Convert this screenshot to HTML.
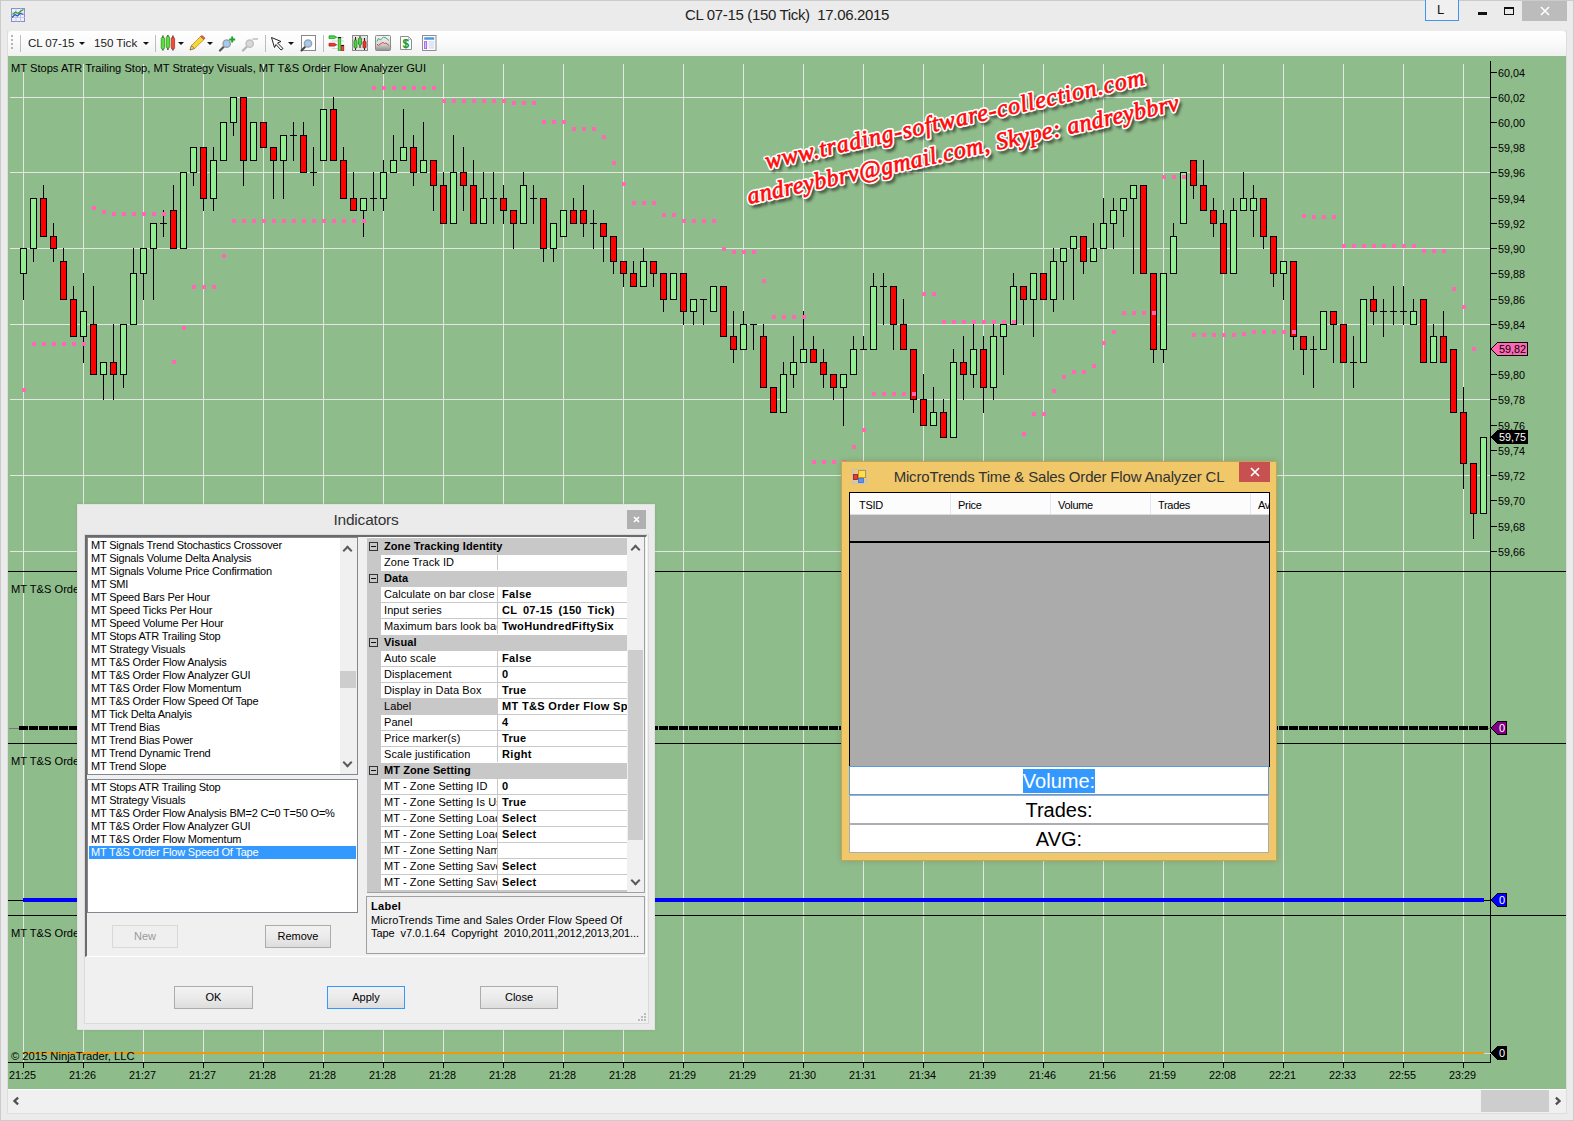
<!DOCTYPE html>
<html><head><meta charset="utf-8"><title>CL 07-15 (150 Tick) 17.06.2015</title>
<style>
*{box-sizing:border-box;margin:0;padding:0}
html,body{width:1574px;height:1121px;overflow:hidden;background:#ebebeb;font-family:"Liberation Sans",sans-serif;font-size:11px;color:#000}
.abs{position:absolute}
#win{position:absolute;left:0;top:0;width:1574px;height:1121px;background:#ebebeb;border:1px solid #cbcbcb}
#cl{position:absolute;left:7px;top:30px;width:1560px;height:1084px;border:1px solid #dedede;border-top:0}
#title{position:absolute;left:685px;top:5px;width:204px;font-size:15px;line-height:20px;color:#222;white-space:nowrap;letter-spacing:-0.34px}
#tb{position:absolute;left:8px;top:31px;width:1558px;height:25px;background:linear-gradient(#fff,#fafafa 50%,#f0f0f0);border-radius:4px 4px 3px 3px}
#chart{position:absolute;left:8px;top:56px;width:1558px;height:1033px;background:#8fbc8b}
#sb{position:absolute;left:8px;top:1089px;width:1558px;height:24px;background:#f0f0f0;border-top:1px solid #fff}
#sb .th{position:absolute;left:1473px;top:0;width:68px;height:22px;background:#cdcdcd}
svg{position:absolute;left:0;top:0}
svg text{font-family:"Liberation Sans",sans-serif}
  .tbt{position:absolute;top:35px;font-size:11.6px;line-height:15px;color:#1a1a1a;white-space:nowrap}
.dd{position:absolute;top:42px;width:0;height:0;border:3px solid transparent;border-top:3.5px solid #111;border-bottom:0}
.sep{position:absolute;top:35px;width:1px;height:17px;background:#bdbdbd}

#dlg{position:absolute;left:77px;top:504px;width:578px;height:526px;background:#ebebeb;border:1px solid #e2e2e2;box-shadow:0 0 3px rgba(0,0,0,.08)}
#dlg .ttl{position:absolute;left:0;top:5px;width:576px;text-align:center;font-size:15.5px;line-height:20px;color:#333;letter-spacing:-0.2px}
#dlg .x{position:absolute;left:549px;top:5px;width:19px;height:19px;background:#b0b0b0;color:#fff;font-size:13px;line-height:18px;text-align:center;font-weight:bold}
#cli{position:absolute;left:6px;top:29px;width:565px;height:490px;background:#f0f0f0;border:1px solid #dadada}
#sunk{position:absolute;left:0;top:0;width:562px;height:422px;border-top:2px solid #6b6b6b;border-left:2px solid #6b6b6b;border-bottom:1px solid #fff;border-right:1px solid #fff}
.lb{position:absolute;background:#fff;border:1px solid #828790;overflow:hidden}
.lb div{height:13px;line-height:13px;padding-left:3px;white-space:nowrap;font-size:11px;letter-spacing:-0.2px}
.lb .sel{background:#3399ff;color:#fff}
.vsb{position:absolute;background:#f0f0f0}
.vsb i{position:absolute;left:0;background:#cdcdcd}
.btn{position:absolute;height:23px;border:1px solid #acacac;background:linear-gradient(#f2f2f2,#ebebeb 50%,#dddddd);font-size:11px;line-height:21px;text-align:center;color:#000}
.btn.dis{border-color:#d9d9d9;background:#efefef;color:#9a9a9a}
.btn.def{border-color:#3399ff}
#pg{position:absolute;left:282px;top:2px;width:278px;height:356px;background:#c8c8c8;border-right:1px solid #a0a0a0;border-bottom:1px solid #a0a0a0;overflow:hidden}
#pg .r{position:absolute;left:14px;width:246px;height:16px;background:#fff;border-bottom:1px solid #c8c8c8}
#pg .r b,#pg .r span{position:absolute;top:0;height:15px;line-height:15px;white-space:nowrap;overflow:hidden;font-size:11px}
#pg .r span{left:0;width:116px;padding-left:3px;letter-spacing:0.08px}
#pg .r b{left:116px;width:130px;padding-left:4px;border-left:1px solid #c8c8c8;letter-spacing:0.33px}
#pg .r.s span{background:#c8c8c8}
#pg .c{position:absolute;left:0;width:260px;height:16px;background:#c8c8c8;font-weight:bold;line-height:15px;padding-left:17px;white-space:nowrap;letter-spacing:0.08px}
#pg .c i{position:absolute;left:2px;top:3px;width:9px;height:9px;border:1px solid #333;background:#c8c8c8}
#pg .c i:after{content:"";position:absolute;left:1px;top:3px;width:5px;height:1px;background:#111}
#desc{position:absolute;left:281px;top:361px;width:279px;height:58px;border:1px solid #a0a0a0;background:#f0f0f0;padding:3px 0 0 4px;line-height:13px;font-size:11px;white-space:nowrap;overflow:hidden;letter-spacing:0.1px}
.chev{position:absolute;left:4px;width:7px;height:7px;border-left:2px solid #5a5a5a;border-top:2px solid #5a5a5a}

#ts{position:absolute;left:841px;top:461px;width:436px;height:400px;background:#f0c869;border:1px solid #c9a352;box-shadow:0 0 6px rgba(0,0,0,.15)}
#ts .ttl{position:absolute;left:0;top:5px;width:434px;text-align:center;font-size:15px;line-height:20px;color:#333;white-space:nowrap;letter-spacing:-0.17px}
#ts .x{position:absolute;left:397px;top:0;width:31px;height:20px;background:#c75050}
#tsc{position:absolute;left:7px;top:30px;width:421px;height:275px;background:#ababab;border:1px solid #000;border-right-width:1px}
#tsc .hd{position:absolute;left:0;top:0;width:419px;height:22px;background:#fcfcfc;border-bottom:1px solid #dcdcdc}
#tsc .hd span{position:absolute;top:0;height:21px;line-height:24px;padding-left:7px;border-right:1px solid #e2e6ee;font-size:11px;width:100px;overflow:hidden;white-space:nowrap;letter-spacing:-0.3px}
#tsc .bl{position:absolute;left:0;top:48px;width:419px;height:2px;background:#000}
.tsr{position:absolute;left:0;width:420px;height:29px;background:#fff;border:1px solid #abadb3;text-align:center;font-size:20px;line-height:28px;letter-spacing:0px}
.tsr em{font-style:normal;background:#3399ff;color:#fff;display:inline-block;height:24px;line-height:24px}
svg .wmt text{font-family:"Liberation Serif",serif;font-style:italic;font-size:24px}
</style></head><body>
<div id="win"></div><div id="cl"></div>

<div id="title">CL 07-15 (150 Tick)&nbsp; 17.06.2015</div>
<!-- app icon -->
<svg class="abs" style="left:11px;top:8px" width="14" height="14" viewBox="0 0 14 14"><rect x=".5" y=".5" width="13" height="13" fill="#eef0fa" stroke="#8c8cc8"/><path d="M.5 5H13.5M.5 9.5H13.5M5 .5V13.5M9.5 .5V13.5" stroke="#c4c8e6" fill="none"/><path d="M1 9.5L4 6.5L6.5 8L9 5.5L12.5 6.5" stroke="#2b50c8" stroke-width="1.3" fill="none"/><path d="M1.5 6.5L4.5 4L7 5.5L10 3L12.5 1.5" stroke="#2ea52e" stroke-width="1.4" fill="none"/></svg>
<!-- window controls -->
<div class="abs" style="left:1425px;top:0;width:34px;height:21px;border:1px solid #3c96f5;border-top:0;background:#f0f0f0"></div>
<div class="abs" style="left:1437px;top:2px;font-size:13px;line-height:15px;color:#111">L</div>
<div class="abs" style="left:1478px;top:12px;width:9px;height:3px;background:#111"></div>
<div class="abs" style="left:1504px;top:7px;width:10px;height:8px;border:1px solid #111;border-top-width:2px"></div>
<div class="abs" style="left:1522px;top:1px;width:45px;height:20px;background:#bcbcbc"></div>
<svg class="abs" style="left:1540px;top:6px" width="10" height="10" viewBox="0 0 10 10"><path d="M1 1L9 9M9 1L1 9" stroke="#fff" stroke-width="1.6"/></svg>
<div id="tb"></div>
<!-- grip -->
<div class="abs" style="left:11px;top:35px;width:2px;height:2px;background:#b5b5b5;box-shadow:0 4px #b5b5b5,0 8px #b5b5b5,0 12px #b5b5b5"></div>
<div class="sep" style="left:20px"></div>
<div class="tbt" style="left:28px;letter-spacing:-0.12px">CL 07-15</div><div class="dd" style="left:79px"></div>
<div class="tbt" style="left:94px;letter-spacing:0">150 Tick</div><div class="dd" style="left:142.5px"></div>
<div class="sep" style="left:155px"></div>
<!-- candles icon -->
<svg class="abs" style="left:160px;top:35px" width="16" height="16" viewBox="0 0 16 16"><path d="M2.9 .5V15.5M7.9 0V15M12.9 .5V15.5" stroke="#222" stroke-width="1.2"/><rect x="1.2" y="2.2" width="3.4" height="12" rx="1.6" fill="#5ade3c" stroke="#2a8a1a" stroke-width=".7"/><rect x="6.2" y="1.2" width="3.4" height="12" rx="1.6" fill="#5ade3c" stroke="#2a8a1a" stroke-width=".7"/><rect x="11.2" y="2.2" width="3.4" height="12" rx="1.6" fill="#f04a3c" stroke="#9c2a1c" stroke-width=".7"/></svg>
<div class="dd" style="left:178px"></div>
<!-- pencil -->
<svg class="abs" style="left:189px;top:35px" width="17" height="16" viewBox="0 0 17 16"><path d="M1 15L2.5 10.5L11.5 1.5L15 4.5L5.5 13.5z" fill="#f7d63c" stroke="#b8901a" stroke-width=".8"/><path d="M11.5 1.5L13 .5L16 3L15 4.5z" fill="#e66a5a" stroke="#a03a30" stroke-width=".6"/><path d="M1 15L2.5 10.5L5.5 13.5z" fill="#e8c9a0" stroke="#6a5a3a" stroke-width=".6"/></svg>
<div class="dd" style="left:207px"></div>
<!-- zoom in -->
<svg class="abs" style="left:218px;top:34px" width="18" height="18" viewBox="0 0 18 18"><path d="M2 16.5L6 12.5" stroke="#555" stroke-width="2.2" stroke-linecap="round"/><circle cx="8.7" cy="9.7" r="3.6" fill="#a4ccf0" stroke="#98a2ae" stroke-width="1.5"/><path d="M14.2 2.5V8.5M11.2 5.5H17.2" stroke="#1da32a" stroke-width="2"/></svg>
<!-- zoom out -->
<svg class="abs" style="left:241px;top:34px" width="18" height="18" viewBox="0 0 18 18"><path d="M2 16.5L6 12.5" stroke="#b4b4b4" stroke-width="2.2" stroke-linecap="round"/><circle cx="8.7" cy="9.7" r="3.6" fill="#d8d8d8" stroke="#c0c0c0" stroke-width="1.5"/><path d="M11.5 5H17" stroke="#c0c0c0" stroke-width="1.6"/></svg>
<div class="sep" style="left:265px"></div>
<!-- cursor -->
<svg class="abs" style="left:270px;top:36px" width="15" height="15" viewBox="0 0 15 15"><path d="M1.5 1.5L11 5.5L7.5 7L13 12.5L11 14L6 8.5L4.5 11.5z" fill="#fff" stroke="#222" stroke-width="1"/></svg>
<div class="dd" style="left:288px"></div>
<!-- magnifier box -->
<svg class="abs" style="left:300px;top:35px" width="16" height="17" viewBox="0 0 16 17"><rect x="1.5" y=".5" width="14" height="15" fill="#fff" stroke="#888"/><path d="M1.5 15.5L5 12" stroke="#444" stroke-width="2" stroke-linecap="round"/><circle cx="8" cy="8.5" r="3.6" fill="#a4ccf0" stroke="#98a2ae" stroke-width="1.5"/></svg>
<div class="sep" style="left:323px"></div>
<!-- DOM icon -->
<svg class="abs" style="left:328px;top:35px" width="17" height="16" viewBox="0 0 17 16"><path d="M4 2.5H16M4 6H16M4 10H16M4 13.5H16" stroke="#d4d4d4"/><path d="M1 .8H6.5L8.6 2.2L6.5 3.6H1z" fill="#3ce03c" stroke="#1f8a1f" stroke-width=".7"/><path d="M1 8.3H6.5L8.6 9.7L6.5 11.1H1z" fill="#f03a30" stroke="#9c1a14" stroke-width=".7"/><rect x="10.2" y="2.5" width="2.6" height="13.5" fill="#5ae03c" stroke="#1f8a1f" stroke-width=".7"/><rect x="10.2" y="2" width="2.6" height="1.2" fill="#111"/><rect x="13.5" y="10.5" width="2.3" height="5.5" fill="#f04a3c" stroke="#9c1a14" stroke-width=".7"/><rect x="13.5" y="10" width="2.3" height="1.1" fill="#111"/></svg>
<!-- candle chart icon -->
<svg class="abs" style="left:352px;top:35px" width="16" height="16" viewBox="0 0 16 16"><rect x=".5" y=".5" width="15" height="15" fill="#e6e6e6" stroke="#8a8a8a"/><path d="M.5 4H15.5M.5 8H15.5M.5 12H15.5" stroke="#c4c4c4"/><path d="M3.5 2V15M8 1V13M12.5 3V15" stroke="#222"/><rect x="2" y="5" width="3" height="8" rx="1" fill="#4fd23a" stroke="#1f7a14" stroke-width=".7"/><rect x="6.5" y="3" width="3" height="7" rx="1" fill="#4fd23a" stroke="#1f7a14" stroke-width=".7"/><rect x="11" y="6" width="3" height="7" rx="1" fill="#ee3a30" stroke="#8c1a14" stroke-width=".7"/></svg>
<!-- line chart icon -->
<svg class="abs" style="left:375px;top:35px" width="16" height="16" viewBox="0 0 16 16"><defs><linearGradient id="lg1" x1="0" y1="0" x2="0" y2="1"><stop offset="0" stop-color="#f6f6f6"/><stop offset=".55" stop-color="#d8d8d8"/><stop offset="1" stop-color="#8e8e8e"/></linearGradient></defs><rect x=".5" y=".5" width="15" height="15" rx="1" fill="url(#lg1)" stroke="#8a8a8a"/><path d="M2 6.5L3.5 3.5L5.5 5L8.5 2L11 3L14 5.5" stroke="#2fb070" fill="none"/><path d="M2 9L3.5 10.5L6 8.5L8 7.5L9.5 8.5L11 8L14 10.5" stroke="#e04040" fill="none"/></svg>
<!-- $ page -->
<svg class="abs" style="left:399px;top:35px" width="14" height="16" viewBox="0 0 14 16"><path d="M1.5 1.5H9.5L12.5 4.5V14.5H1.5z" fill="#fff" stroke="#8e8e8e"/><path d="M9.5 1.5V4.5H12.5" fill="none" stroke="#b0b0b0" stroke-width=".8"/><text x="6.8" y="12.6" font-size="12" font-weight="bold" fill="#1f9a30" text-anchor="middle">$</text><path d="M6.8 4V13.1" stroke="#1f9a30" stroke-width="1"/></svg>
<!-- table icon -->
<svg class="abs" style="left:422px;top:35px" width="15" height="16" viewBox="0 0 15 16"><rect x=".5" y=".5" width="13.5" height="15" fill="#fdfdfe" stroke="#8e8e96"/><rect x="2.2" y="2.2" width="10" height="2.6" rx=".6" fill="#4a9ae0"/><rect x="2.6" y="6.6" width="2" height="7" fill="#d8c4f8" stroke="#a05af0" stroke-width=".9"/><path d="M6.5 6.8H12.2M6.5 8.8H12.2M6.5 10.8H12.2M6.5 12.8H12.2" stroke="#d4d8ea" stroke-width="1.2"/></svg>

<div id="chart"></div>
<div id="sb"><div class="th"></div><svg class="abs" style="left:4px;top:5.5px" width="8" height="10" viewBox="0 0 8 10"><path d="M6.1 1.7L2.5 5L6.1 8.3" stroke="#505050" stroke-width="2.3" fill="none"/></svg><svg class="abs" style="left:1546px;top:5.5px" width="8" height="10" viewBox="0 0 8 10"><path d="M1.9 1.7L5.5 5L1.9 8.3" stroke="#505050" stroke-width="2.3" fill="none"/></svg></div>
<svg width="1574" height="1121" viewBox="0 0 1574 1121" shape-rendering="crispEdges">
<path d="M10 97.5H1490M10 172.5H1490M10 248.5H1490M10 324.5H1490M10 399.5H1490M10 475.5H1490M10 551.5H1490M23.5 64V1062M83.5 64V1062M143.5 64V1062M203.5 64V1062M263.5 64V1062M323.5 64V1062M383.5 64V1062M443.5 64V1062M503.5 64V1062M563.5 64V1062M623.5 64V1062M683.5 64V1062M743.5 64V1062M803.5 64V1062M863.5 64V1062M923.5 64V1062M983.5 64V1062M1043.5 64V1062M1103.5 64V1062M1163.5 64V1062M1223.5 64V1062M1283.5 64V1062M1343.5 64V1062M1403.5 64V1062M1463.5 64V1062" stroke="#e4e6e4" stroke-width="1" fill="none"/>
<path d="M23.5 248V300M33.5 198V262M43.5 185V237M53.5 223V262M63.5 248V300M73.5 286V337M83.5 273V363M93.5 286V375M103.5 362V400M113.5 324V400M123.5 324V388M133.5 248V325M143.5 248V300M153.5 223V300M163.5 210V237M160 223.5H167M173.5 185V249M193.5 147V186M203.5 147V211M213.5 147V211M233.5 97V136M243.5 97V186M273.5 147V199M283.5 135V199M293.5 122V161M290 135.5H297M303.5 122V173M313.5 147V186M310 172.5H317M333.5 97V161M343.5 147V199M353.5 172V211M363.5 198V237M373.5 172V211M370 198.5H377M383.5 160V211M393.5 135V173M403.5 109V161M413.5 135V186M423.5 122V173M433.5 160V211M443.5 172V224M453.5 135V224M463.5 147V211M473.5 160V224M483.5 172V224M493.5 172V224M490 198.5H497M503.5 185V224M513.5 210V249M523.5 172V224M533.5 185V224M530 198.5H537M543.5 198V262M553.5 223V262M573.5 198V224M583.5 185V237M593.5 210V249M590 223.5H597M603.5 223V262M613.5 236V274M623.5 261V287M633.5 261V287M643.5 248V287M653.5 261V287M663.5 273V312M683.5 273V325M693.5 299V325M703.5 299V325M700 299.5H707M733.5 311V363M743.5 311V350M753.5 324V350M750 324.5H757M763.5 324V388M783.5 362V413M793.5 336V388M803.5 311V363M813.5 336V363M823.5 349V388M833.5 374V400M843.5 374V426M853.5 336V375M863.5 336V350M860 349.5H867M873.5 273V350M883.5 273V325M880 286.5H887M893.5 286V350M903.5 299V350M913.5 349V413M923.5 374V426M933.5 387V426M943.5 399V438M953.5 349V438M963.5 336V400M973.5 324V388M983.5 336V413M993.5 324V400M1003.5 324V375M1013.5 273V325M1023.5 286V325M1033.5 273V337M1053.5 248V312M1063.5 248V300M1073.5 236V300M1083.5 236V274M1093.5 223V262M1103.5 198V249M1113.5 198V249M1123.5 198V237M1133.5 185V274M1153.5 273V363M1163.5 273V363M1173.5 223V274M1193.5 160V199M1203.5 160V211M1213.5 198V237M1223.5 210V274M1233.5 198V274M1243.5 172V211M1253.5 185V237M1263.5 198V249M1273.5 236V287M1283.5 261V300M1293.5 261V350M1303.5 336V375M1313.5 336V388M1310 349.5H1317M1333.5 311V363M1353.5 336V388M1350 362.5H1357M1373.5 286V325M1383.5 299V337M1380 311.5H1387M1393.5 286V325M1390 311.5H1397M1403.5 286V325M1400 311.5H1407M1413.5 299V325M1433.5 324V363M1443.5 311V363M1463.5 387V489M1473.5 463V539" stroke="#000" stroke-width="1" fill="none"/>
<path d="M20.5 248.5H26.5V273.5H20.5zM30.5 198.5H36.5V248.5H30.5zM80.5 311.5H86.5V336.5H80.5zM100.5 362.5H106.5V374.5H100.5zM120.5 324.5H126.5V374.5H120.5zM130.5 273.5H136.5V324.5H130.5zM140.5 248.5H146.5V273.5H140.5zM150.5 223.5H156.5V248.5H150.5zM180.5 172.5H186.5V248.5H180.5zM190.5 147.5H196.5V172.5H190.5zM210.5 160.5H216.5V198.5H210.5zM220.5 122.5H226.5V160.5H220.5zM230.5 97.5H236.5V122.5H230.5zM250.5 122.5H256.5V160.5H250.5zM280.5 135.5H286.5V160.5H280.5zM320.5 109.5H326.5V160.5H320.5zM360.5 198.5H366.5V210.5H360.5zM380.5 172.5H386.5V198.5H380.5zM390.5 160.5H396.5V172.5H390.5zM400.5 147.5H406.5V160.5H400.5zM420.5 160.5H426.5V172.5H420.5zM450.5 172.5H456.5V223.5H450.5zM480.5 198.5H486.5V223.5H480.5zM520.5 185.5H526.5V223.5H520.5zM550.5 223.5H556.5V248.5H550.5zM560.5 210.5H566.5V236.5H560.5zM640.5 261.5H646.5V286.5H640.5zM670.5 273.5H676.5V299.5H670.5zM690.5 299.5H696.5V311.5H690.5zM710.5 286.5H716.5V311.5H710.5zM740.5 324.5H746.5V349.5H740.5zM780.5 374.5H786.5V412.5H780.5zM790.5 362.5H796.5V374.5H790.5zM800.5 349.5H806.5V362.5H800.5zM840.5 374.5H846.5V387.5H840.5zM850.5 349.5H856.5V374.5H850.5zM870.5 286.5H876.5V349.5H870.5zM930.5 412.5H936.5V425.5H930.5zM950.5 362.5H956.5V437.5H950.5zM970.5 349.5H976.5V374.5H970.5zM990.5 336.5H996.5V387.5H990.5zM1000.5 324.5H1006.5V336.5H1000.5zM1010.5 286.5H1016.5V324.5H1010.5zM1030.5 273.5H1036.5V299.5H1030.5zM1050.5 261.5H1056.5V299.5H1050.5zM1060.5 248.5H1066.5V261.5H1060.5zM1070.5 236.5H1076.5V248.5H1070.5zM1090.5 248.5H1096.5V261.5H1090.5zM1100.5 223.5H1106.5V248.5H1100.5zM1110.5 210.5H1116.5V223.5H1110.5zM1120.5 198.5H1126.5V210.5H1120.5zM1130.5 185.5H1136.5V198.5H1130.5zM1160.5 273.5H1166.5V349.5H1160.5zM1170.5 236.5H1176.5V273.5H1170.5zM1180.5 172.5H1186.5V223.5H1180.5zM1230.5 210.5H1236.5V273.5H1230.5zM1240.5 198.5H1246.5V210.5H1240.5zM1250.5 198.5H1256.5V210.5H1250.5zM1280.5 261.5H1286.5V273.5H1280.5zM1320.5 311.5H1326.5V349.5H1320.5zM1360.5 299.5H1366.5V362.5H1360.5zM1410.5 311.5H1416.5V324.5H1410.5zM1430.5 336.5H1436.5V362.5H1430.5zM1480.5 437.5H1486.5V513.5H1480.5z" stroke="#000" stroke-width="1" fill="#90ee90"/>
<path d="M40.5 198.5H46.5V236.5H40.5zM50.5 236.5H56.5V248.5H50.5zM60.5 261.5H66.5V299.5H60.5zM70.5 299.5H76.5V336.5H70.5zM90.5 324.5H96.5V374.5H90.5zM110.5 362.5H116.5V374.5H110.5zM170.5 210.5H176.5V248.5H170.5zM200.5 147.5H206.5V198.5H200.5zM240.5 97.5H246.5V160.5H240.5zM260.5 122.5H266.5V147.5H260.5zM270.5 147.5H276.5V160.5H270.5zM300.5 135.5H306.5V172.5H300.5zM330.5 109.5H336.5V160.5H330.5zM340.5 160.5H346.5V198.5H340.5zM350.5 198.5H356.5V210.5H350.5zM410.5 147.5H416.5V172.5H410.5zM430.5 160.5H436.5V185.5H430.5zM440.5 185.5H446.5V223.5H440.5zM460.5 172.5H466.5V185.5H460.5zM470.5 185.5H476.5V223.5H470.5zM500.5 198.5H506.5V210.5H500.5zM510.5 210.5H516.5V223.5H510.5zM540.5 198.5H546.5V248.5H540.5zM570.5 210.5H576.5V223.5H570.5zM580.5 210.5H586.5V223.5H580.5zM600.5 223.5H606.5V236.5H600.5zM610.5 236.5H616.5V261.5H610.5zM620.5 261.5H626.5V273.5H620.5zM630.5 273.5H636.5V286.5H630.5zM650.5 261.5H656.5V273.5H650.5zM660.5 273.5H666.5V299.5H660.5zM680.5 273.5H686.5V311.5H680.5zM720.5 286.5H726.5V336.5H720.5zM730.5 336.5H736.5V349.5H730.5zM760.5 336.5H766.5V387.5H760.5zM770.5 387.5H776.5V412.5H770.5zM810.5 349.5H816.5V362.5H810.5zM820.5 362.5H826.5V374.5H820.5zM830.5 374.5H836.5V387.5H830.5zM890.5 286.5H896.5V324.5H890.5zM900.5 324.5H906.5V349.5H900.5zM910.5 349.5H916.5V399.5H910.5zM920.5 399.5H926.5V425.5H920.5zM940.5 412.5H946.5V437.5H940.5zM960.5 362.5H966.5V374.5H960.5zM980.5 349.5H986.5V387.5H980.5zM1020.5 286.5H1026.5V299.5H1020.5zM1040.5 273.5H1046.5V299.5H1040.5zM1080.5 236.5H1086.5V261.5H1080.5zM1140.5 185.5H1146.5V273.5H1140.5zM1150.5 273.5H1156.5V349.5H1150.5zM1190.5 160.5H1196.5V185.5H1190.5zM1200.5 185.5H1206.5V210.5H1200.5zM1210.5 210.5H1216.5V223.5H1210.5zM1220.5 223.5H1226.5V273.5H1220.5zM1260.5 198.5H1266.5V236.5H1260.5zM1270.5 236.5H1276.5V273.5H1270.5zM1290.5 261.5H1296.5V336.5H1290.5zM1300.5 336.5H1306.5V349.5H1300.5zM1330.5 311.5H1336.5V324.5H1330.5zM1340.5 324.5H1346.5V362.5H1340.5zM1370.5 299.5H1376.5V311.5H1370.5zM1420.5 299.5H1426.5V362.5H1420.5zM1440.5 336.5H1446.5V362.5H1440.5zM1450.5 349.5H1456.5V412.5H1450.5zM1460.5 412.5H1466.5V463.5H1460.5zM1470.5 463.5H1476.5V513.5H1470.5z" stroke="#000" stroke-width="1" fill="#ff0000"/>
<path d="M22 388h4v4h-4zM32 342h4v4h-4zM42 342h4v4h-4zM52 342h4v4h-4zM62 342h4v4h-4zM72 342h4v4h-4zM82 342h4v4h-4zM92 206h4v4h-4zM102 210h4v4h-4zM112 212h4v4h-4zM122 212h4v4h-4zM132 212h4v4h-4zM142 212h4v4h-4zM152 212h4v4h-4zM162 212h4v4h-4zM172 360h4v4h-4zM182 326h4v4h-4zM192 285h4v4h-4zM202 285h4v4h-4zM212 285h4v4h-4zM222 254h4v4h-4zM232 219h4v4h-4zM242 219h4v4h-4zM252 219h4v4h-4zM262 219h4v4h-4zM272 219h4v4h-4zM282 219h4v4h-4zM292 219h4v4h-4zM302 219h4v4h-4zM312 219h4v4h-4zM322 219h4v4h-4zM332 219h4v4h-4zM342 219h4v4h-4zM352 219h4v4h-4zM362 219h4v4h-4zM372 86h4v4h-4zM382 86h4v4h-4zM392 86h4v4h-4zM402 86h4v4h-4zM412 86h4v4h-4zM422 86h4v4h-4zM432 86h4v4h-4zM442 99h4v4h-4zM452 99h4v4h-4zM462 99h4v4h-4zM472 99h4v4h-4zM482 99h4v4h-4zM492 99h4v4h-4zM502 99h4v4h-4zM512 101h4v4h-4zM522 101h4v4h-4zM532 101h4v4h-4zM542 120h4v4h-4zM552 120h4v4h-4zM562 120h4v4h-4zM572 127h4v4h-4zM582 127h4v4h-4zM592 127h4v4h-4zM602 135h4v4h-4zM612 161h4v4h-4zM622 182h4v4h-4zM632 201h4v4h-4zM642 201h4v4h-4zM652 201h4v4h-4zM662 213h4v4h-4zM672 213h4v4h-4zM682 219h4v4h-4zM692 219h4v4h-4zM702 219h4v4h-4zM712 219h4v4h-4zM722 247h4v4h-4zM732 250h4v4h-4zM742 250h4v4h-4zM752 250h4v4h-4zM762 279h4v4h-4zM772 315h4v4h-4zM782 315h4v4h-4zM792 315h4v4h-4zM802 315h4v4h-4zM812 460h4v4h-4zM822 460h4v4h-4zM832 460h4v4h-4zM842 460h4v4h-4zM852 445h4v4h-4zM862 428h4v4h-4zM872 392h4v4h-4zM882 392h4v4h-4zM892 392h4v4h-4zM902 392h4v4h-4zM912 392h4v4h-4zM922 292h4v4h-4zM932 292h4v4h-4zM942 320h4v4h-4zM952 320h4v4h-4zM962 320h4v4h-4zM972 320h4v4h-4zM982 320h4v4h-4zM992 320h4v4h-4zM1002 320h4v4h-4zM1012 320h4v4h-4zM1022 432h4v4h-4zM1032 412h4v4h-4zM1042 412h4v4h-4zM1052 389h4v4h-4zM1062 375h4v4h-4zM1072 370h4v4h-4zM1082 370h4v4h-4zM1092 364h4v4h-4zM1102 341h4v4h-4zM1112 330h4v4h-4zM1122 311h4v4h-4zM1132 311h4v4h-4zM1142 311h4v4h-4zM1152 311h4v4h-4zM1162 175h4v4h-4zM1172 175h4v4h-4zM1182 175h4v4h-4zM1192 333h4v4h-4zM1202 333h4v4h-4zM1212 333h4v4h-4zM1222 333h4v4h-4zM1232 333h4v4h-4zM1242 332h4v4h-4zM1252 330h4v4h-4zM1262 330h4v4h-4zM1272 330h4v4h-4zM1282 330h4v4h-4zM1292 330h4v4h-4zM1302 214h4v4h-4zM1312 215h4v4h-4zM1322 215h4v4h-4zM1332 215h4v4h-4zM1342 244h4v4h-4zM1352 244h4v4h-4zM1362 244h4v4h-4zM1372 244h4v4h-4zM1382 244h4v4h-4zM1392 244h4v4h-4zM1402 244h4v4h-4zM1412 244h4v4h-4zM1422 249h4v4h-4zM1432 249h4v4h-4zM1442 249h4v4h-4zM1452 287h4v4h-4zM1462 305h4v4h-4zM1472 347h4v4h-4z" fill="#ff69b4"/>
<path d="M8 571.5H1566M8 743.5H1566M8 915.5H1566M8 1062.5H1491M1490.5 61V1063" stroke="#000" fill="none"/>
<path d="M1491 72.5H1497M1491 97.5H1497M1491 122.5H1497M1491 147.5H1497M1491 172.5H1497M1491 198.5H1497M1491 223.5H1497M1491 248.5H1497M1491 273.5H1497M1491 299.5H1497M1491 324.5H1497M1491 349.5H1497M1491 374.5H1497M1491 399.5H1497M1491 425.5H1497M1491 450.5H1497M1491 475.5H1497M1491 500.5H1497M1491 526.5H1497M1491 551.5H1497M23.5 1063V1068M83.5 1063V1068M143.5 1063V1068M203.5 1063V1068M263.5 1063V1068M323.5 1063V1068M383.5 1063V1068M443.5 1063V1068M503.5 1063V1068M563.5 1063V1068M623.5 1063V1068M683.5 1063V1068M743.5 1063V1068M803.5 1063V1068M863.5 1063V1068M923.5 1063V1068M983.5 1063V1068M1043.5 1063V1068M1103.5 1063V1068M1163.5 1063V1068M1223.5 1063V1068M1283.5 1063V1068M1343.5 1063V1068M1403.5 1063V1068M1463.5 1063V1068" stroke="#000" fill="none"/>
<g fill="#000"><text x="1498" y="76.8" font-size="11" fill="#000" textLength="27" lengthAdjust="spacingAndGlyphs">60,04</text><text x="1498" y="101.8" font-size="11" fill="#000" textLength="27" lengthAdjust="spacingAndGlyphs">60,02</text><text x="1498" y="126.8" font-size="11" fill="#000" textLength="27" lengthAdjust="spacingAndGlyphs">60,00</text><text x="1498" y="151.8" font-size="11" fill="#000" textLength="27" lengthAdjust="spacingAndGlyphs">59,98</text><text x="1498" y="176.8" font-size="11" fill="#000" textLength="27" lengthAdjust="spacingAndGlyphs">59,96</text><text x="1498" y="202.8" font-size="11" fill="#000" textLength="27" lengthAdjust="spacingAndGlyphs">59,94</text><text x="1498" y="227.8" font-size="11" fill="#000" textLength="27" lengthAdjust="spacingAndGlyphs">59,92</text><text x="1498" y="252.8" font-size="11" fill="#000" textLength="27" lengthAdjust="spacingAndGlyphs">59,90</text><text x="1498" y="277.8" font-size="11" fill="#000" textLength="27" lengthAdjust="spacingAndGlyphs">59,88</text><text x="1498" y="303.8" font-size="11" fill="#000" textLength="27" lengthAdjust="spacingAndGlyphs">59,86</text><text x="1498" y="328.8" font-size="11" fill="#000" textLength="27" lengthAdjust="spacingAndGlyphs">59,84</text><text x="1498" y="353.8" font-size="11" fill="#000" textLength="27" lengthAdjust="spacingAndGlyphs">59,82</text><text x="1498" y="378.8" font-size="11" fill="#000" textLength="27" lengthAdjust="spacingAndGlyphs">59,80</text><text x="1498" y="403.8" font-size="11" fill="#000" textLength="27" lengthAdjust="spacingAndGlyphs">59,78</text><text x="1498" y="429.8" font-size="11" fill="#000" textLength="27" lengthAdjust="spacingAndGlyphs">59,76</text><text x="1498" y="454.8" font-size="11" fill="#000" textLength="27" lengthAdjust="spacingAndGlyphs">59,74</text><text x="1498" y="479.8" font-size="11" fill="#000" textLength="27" lengthAdjust="spacingAndGlyphs">59,72</text><text x="1498" y="504.8" font-size="11" fill="#000" textLength="27" lengthAdjust="spacingAndGlyphs">59,70</text><text x="1498" y="530.8" font-size="11" fill="#000" textLength="27" lengthAdjust="spacingAndGlyphs">59,68</text><text x="1498" y="555.8" font-size="11" fill="#000" textLength="27" lengthAdjust="spacingAndGlyphs">59,66</text><text x="22.5" y="1079" font-size="11" fill="#000" text-anchor="middle" textLength="27" lengthAdjust="spacingAndGlyphs">21:25</text><text x="82.5" y="1079" font-size="11" fill="#000" text-anchor="middle" textLength="27" lengthAdjust="spacingAndGlyphs">21:26</text><text x="142.5" y="1079" font-size="11" fill="#000" text-anchor="middle" textLength="27" lengthAdjust="spacingAndGlyphs">21:27</text><text x="202.5" y="1079" font-size="11" fill="#000" text-anchor="middle" textLength="27" lengthAdjust="spacingAndGlyphs">21:27</text><text x="262.5" y="1079" font-size="11" fill="#000" text-anchor="middle" textLength="27" lengthAdjust="spacingAndGlyphs">21:28</text><text x="322.5" y="1079" font-size="11" fill="#000" text-anchor="middle" textLength="27" lengthAdjust="spacingAndGlyphs">21:28</text><text x="382.5" y="1079" font-size="11" fill="#000" text-anchor="middle" textLength="27" lengthAdjust="spacingAndGlyphs">21:28</text><text x="442.5" y="1079" font-size="11" fill="#000" text-anchor="middle" textLength="27" lengthAdjust="spacingAndGlyphs">21:28</text><text x="502.5" y="1079" font-size="11" fill="#000" text-anchor="middle" textLength="27" lengthAdjust="spacingAndGlyphs">21:28</text><text x="562.5" y="1079" font-size="11" fill="#000" text-anchor="middle" textLength="27" lengthAdjust="spacingAndGlyphs">21:28</text><text x="622.5" y="1079" font-size="11" fill="#000" text-anchor="middle" textLength="27" lengthAdjust="spacingAndGlyphs">21:28</text><text x="682.5" y="1079" font-size="11" fill="#000" text-anchor="middle" textLength="27" lengthAdjust="spacingAndGlyphs">21:29</text><text x="742.5" y="1079" font-size="11" fill="#000" text-anchor="middle" textLength="27" lengthAdjust="spacingAndGlyphs">21:29</text><text x="802.5" y="1079" font-size="11" fill="#000" text-anchor="middle" textLength="27" lengthAdjust="spacingAndGlyphs">21:30</text><text x="862.5" y="1079" font-size="11" fill="#000" text-anchor="middle" textLength="27" lengthAdjust="spacingAndGlyphs">21:31</text><text x="922.5" y="1079" font-size="11" fill="#000" text-anchor="middle" textLength="27" lengthAdjust="spacingAndGlyphs">21:34</text><text x="982.5" y="1079" font-size="11" fill="#000" text-anchor="middle" textLength="27" lengthAdjust="spacingAndGlyphs">21:39</text><text x="1042.5" y="1079" font-size="11" fill="#000" text-anchor="middle" textLength="27" lengthAdjust="spacingAndGlyphs">21:46</text><text x="1102.5" y="1079" font-size="11" fill="#000" text-anchor="middle" textLength="27" lengthAdjust="spacingAndGlyphs">21:56</text><text x="1162.5" y="1079" font-size="11" fill="#000" text-anchor="middle" textLength="27" lengthAdjust="spacingAndGlyphs">21:59</text><text x="1222.5" y="1079" font-size="11" fill="#000" text-anchor="middle" textLength="27" lengthAdjust="spacingAndGlyphs">22:08</text><text x="1282.5" y="1079" font-size="11" fill="#000" text-anchor="middle" textLength="27" lengthAdjust="spacingAndGlyphs">22:21</text><text x="1342.5" y="1079" font-size="11" fill="#000" text-anchor="middle" textLength="27" lengthAdjust="spacingAndGlyphs">22:33</text><text x="1402.5" y="1079" font-size="11" fill="#000" text-anchor="middle" textLength="27" lengthAdjust="spacingAndGlyphs">22:55</text><text x="1462.5" y="1079" font-size="11" fill="#000" text-anchor="middle" textLength="27" lengthAdjust="spacingAndGlyphs">23:29</text></g>
<path d="M9 728.5H19M1488 728.5H1491" stroke="#777" fill="none"/>
<path d="M19 728H1488" stroke="#000" stroke-width="4" stroke-dasharray="9 1" fill="none"/>
<path d="M8 900.5H23M1484 900.5H1491" stroke="#000" fill="none"/>
<path d="M23 900H1484" stroke="#0000ff" stroke-width="4" fill="none"/>
<path d="M1484 1053.5H1491" stroke="#ddd" fill="none"/>
<path d="M23 1053H1484" stroke="#ee990e" stroke-width="2" fill="none"/>
<path d="M1491 349L1497.5 342.5H1527.5V355.5H1497.5z" fill="#ff69b4" stroke="#000"/><text x="1499" y="352.7" font-size="11" fill="#000" textLength="27" lengthAdjust="spacingAndGlyphs">59,82</text>
<path d="M1491 437L1497.5 430.5H1527.5V443.5H1497.5z" fill="#000" stroke="#000"/><text x="1499" y="440.7" font-size="11" fill="#fff" textLength="27" lengthAdjust="spacingAndGlyphs">59,75</text>
<path d="M1491 728L1497.5 721.5H1506.5V734.5H1497.5z" fill="#800080" stroke="#000"/><text x="1499" y="731.7" font-size="11" fill="#fff">0</text>
<path d="M1491 900L1497.5 893.5H1506.5V906.5H1497.5z" fill="#0000ff" stroke="#000"/><text x="1499" y="903.7" font-size="11" fill="#fff">0</text>
<path d="M1491 1053L1497.5 1046.5H1506.5V1059.5H1497.5z" fill="#000" stroke="#000"/><text x="1499" y="1056.7" font-size="11" fill="#fff">0</text>
<text x="11" y="72" font-size="11" fill="#000" textLength="415" lengthAdjust="spacingAndGlyphs">MT Stops ATR Trailing Stop, MT Strategy Visuals, MT T&amp;S Order Flow Analyzer GUI</text>
<text x="11" y="593" font-size="11" fill="#000" textLength="255.5" lengthAdjust="spacingAndGlyphs">MT T&amp;S Order Flow Analysis BM=2 C=0 T=50 O=%</text>
<text x="11" y="765" font-size="11" fill="#000" textLength="157.3" lengthAdjust="spacingAndGlyphs">MT T&amp;S Order Flow Momentum</text>
<text x="11" y="937" font-size="11" fill="#000" textLength="175.7" lengthAdjust="spacingAndGlyphs">MT T&amp;S Order Flow Speed Of Tape</text>
<text x="11" y="1060" font-size="11" fill="#000" textLength="123.5" lengthAdjust="spacingAndGlyphs">© 2015 NinjaTrader, LLC</text>
</svg>
<svg class="abs" style="left:0;top:0;overflow:visible" width="1574" height="300" viewBox="0 0 1574 300">
<defs><filter id="wmb" x="-5%" y="-30%" width="110%" height="160%"><feGaussianBlur stdDeviation="1.5"/></filter></defs>
<g class="wmt">
<g transform="translate(767,169) rotate(-12.6)">
<text x="2" y="4" fill="#000" opacity=".6" filter="url(#wmb)" textLength="388" stroke="#000" stroke-width="2">www.trading-software-collection.com</text>
<text x="0" y="0" fill="#fff" stroke="#fff" stroke-width="4" stroke-linejoin="round" textLength="388">www.trading-software-collection.com</text>
<text x="0" y="0" fill="#ff0a0a" stroke="#ff0a0a" stroke-width=".7" textLength="388">www.trading-software-collection.com</text>
</g>
<g transform="translate(749,204) rotate(-12.3)">
<text x="2" y="4" fill="#000" opacity=".6" filter="url(#wmb)" textLength="441" stroke="#000" stroke-width="2">andreybbrv@gmail.com, Skype: andreybbrv</text>
<text x="0" y="0" fill="#fff" stroke="#fff" stroke-width="4" stroke-linejoin="round" textLength="441">andreybbrv@gmail.com, Skype: andreybbrv</text>
<text x="0" y="0" fill="#ff0a0a" stroke="#ff0a0a" stroke-width=".7" textLength="441">andreybbrv@gmail.com, Skype: andreybbrv</text>
</g></g></svg>

<div id="dlg"><div class="ttl">Indicators</div><div class="x"><svg class="abs" style="left:6px;top:6px" width="7" height="7" viewBox="0 0 7 7"><path d="M1 1L6 6M6 1L1 6" stroke="#fff" stroke-width="1.7"/></svg></div><div id="cli"><div id="sunk"></div>
<div class="lb" style="left:2px;top:2px;width:271px;height:238px"><div style="height:1px;padding:0"></div><div>MT Signals Trend Stochastics Crossover</div><div>MT Signals Volume Delta Analysis</div><div>MT Signals Volume Price Confirmation</div><div>MT SMI</div><div>MT Speed Bars Per Hour</div><div>MT Speed Ticks Per Hour</div><div>MT Speed Volume Per Hour</div><div>MT Stops ATR Trailing Stop</div><div>MT Strategy Visuals</div><div>MT T&amp;S Order Flow Analysis</div><div>MT T&amp;S Order Flow Analyzer GUI</div><div>MT T&amp;S Order Flow Momentum</div><div>MT T&amp;S Order Flow Speed Of Tape</div><div>MT Tick Delta Analyis</div><div>MT Trend Bias</div><div>MT Trend Bias Power</div><div>MT Trend Dynamic Trend</div><div>MT Trend Slope</div></div>
<div class="vsb" style="left:255px;top:3px;width:17px;height:236px"><i style="top:133px;width:16px;height:17px"></i><s class="chev" style="top:9px;transform:rotate(45deg)"></s><s class="chev" style="top:221px;transform:rotate(225deg)"></s></div>
<div class="lb" style="left:2px;top:244px;width:271px;height:134px"><div style="height:1px;padding:0"></div><div style="margin:0 1px 0 1px;padding-left:2px">MT Stops ATR Trailing Stop</div><div style="margin:0 1px 0 1px;padding-left:2px">MT Strategy Visuals</div><div style="margin:0 1px 0 1px;padding-left:2px">MT T&amp;S Order Flow Analysis BM=2 C=0 T=50 O=%</div><div style="margin:0 1px 0 1px;padding-left:2px">MT T&amp;S Order Flow Analyzer GUI</div><div style="margin:0 1px 0 1px;padding-left:2px">MT T&amp;S Order Flow Momentum</div><div class=sel style="margin:0 1px 0 1px;padding-left:2px">MT T&amp;S Order Flow Speed Of Tape</div></div>
<div class="btn dis" style="left:27px;top:390px;width:66px">New</div>
<div class="btn" style="left:180px;top:390px;width:66px">Remove</div>
<div id="pg"><div class="abs" style="left:0;top:0;width:260px;height:1px;background:#fff"></div>
<div class="c" style="top:2px"><i></i>Zone Tracking Identity</div>
<div class="r" style="top:18px;border-bottom-color:#fff"><span>Zone Track ID</span><b></b></div>
<div class="c" style="top:34px"><i></i>Data</div>
<div class="r" style="top:50px"><span>Calculate on bar close</span><b>False</b></div>
<div class="r" style="top:66px"><span>Input series</span><b style="word-spacing:2.4px">CL 07-15 (150 Tick)</b></div>
<div class="r" style="top:82px;border-bottom-color:#fff"><span>Maximum bars look back</span><b>TwoHundredFiftySix</b></div>
<div class="c" style="top:98px"><i></i>Visual</div>
<div class="r" style="top:114px"><span>Auto scale</span><b>False</b></div>
<div class="r" style="top:130px"><span>Displacement</span><b>0</b></div>
<div class="r" style="top:146px"><span>Display in Data Box</span><b>True</b></div>
<div class="r s" style="top:162px"><span>Label</span><b>MT T&amp;S Order Flow Speed Of Tape</b></div>
<div class="r" style="top:178px"><span>Panel</span><b>4</b></div>
<div class="r" style="top:194px"><span>Price marker(s)</span><b>True</b></div>
<div class="r" style="top:210px;border-bottom-color:#fff"><span>Scale justification</span><b>Right</b></div>
<div class="c" style="top:226px"><i></i>MT Zone Setting</div>
<div class="r" style="top:242px"><span>MT - Zone Setting ID</span><b>0</b></div>
<div class="r" style="top:258px"><span>MT - Zone Setting Is Used</span><b>True</b></div>
<div class="r" style="top:274px"><span>MT - Zone Setting Load</span><b>Select</b></div>
<div class="r" style="top:290px"><span>MT - Zone Setting Load</span><b>Select</b></div>
<div class="r" style="top:306px"><span>MT - Zone Setting Name</span><b></b></div>
<div class="r" style="top:322px"><span>MT - Zone Setting Save</span><b>Select</b></div>
<div class="r" style="top:338px"><span>MT - Zone Setting Save</span><b>Select</b></div>
<div class="vsb" style="left:260px;top:0;width:17px;height:356px"><i style="top:113px;left:1px;width:15px;height:190px"></i><s class="chev" style="top:9px;left:5px;transform:rotate(45deg)"></s><s class="chev" style="top:340px;left:5px;transform:rotate(225deg)"></s></div>
</div>
<div id="desc"><b style="letter-spacing:0.3px;display:block;height:14px">Label</b>MicroTrends Time and Sales Order Flow Speed Of<br><span style="letter-spacing:-0.06px">Tape&nbsp; v7.0.1.64&nbsp; Copyright&nbsp; 2010,2011,2012,2013,201...</span></div>
<div class="btn" style="left:89px;top:451px;width:79px">OK</div>
<div class="btn def" style="left:242px;top:451px;width:78px">Apply</div>
<div class="btn" style="left:395px;top:451px;width:78px">Close</div>
<div class="abs" style="left:559px;top:484px;width:2px;height:2px;background:#bdbdbd;box-shadow:-3px 0 #bdbdbd,-6px 0 #bdbdbd,0 -3px #bdbdbd,-3px -3px #bdbdbd,0 -6px #bdbdbd"></div>
</div></div>
<div id="ts">
<svg class="abs" style="left:10px;top:7px" width="15" height="15" viewBox="0 0 15 15"><rect x=".5" y=".5" width="14" height="14" fill="#cfcfcf" stroke="#c2c2c2"/><rect x="1.5" y="1.5" width="4" height="3" fill="#f0c869"/><rect x="1.5" y="11.5" width="2" height="2" fill="#f0c050"/><rect x="4.5" y="11.5" width="1.2" height="2" fill="#f0c050"/><rect x="12.3" y="9.5" width="1.2" height="4" fill="#f0c050"/><rect x="6.5" y="1.5" width="7" height="7" fill="#fddc5a" stroke="#c89a14"/><rect x="1.5" y="5.5" width="4" height="5" fill="#e04030" stroke="#a01410" stroke-width=".8"/><rect x="6.5" y="9.5" width="5" height="4" fill="#5a96ee" stroke="#3c6ec8" stroke-width=".8"/></svg>
<div class="ttl">MicroTrends Time &amp; Sales Order Flow Analyzer CL</div>
<div class="x"><svg class="abs" style="left:11px;top:5px" width="10" height="10" viewBox="0 0 10 10"><path d="M1 1L9 9M9 1L1 9" stroke="#fff" stroke-width="1.7"/></svg></div>
<div id="tsc"><div class="hd"><span style="left:0;width:101px;padding-left:9px">TSID</span><span style="left:101px">Price</span><span style="left:201px">Volume</span><span style="left:301px">Trades</span><span style="left:401px;width:18px;border:0">Av</span></div><div class="bl"></div></div>
<div class="tsr" style="left:7px;top:304px;border-color:#569de5"><em>Volume:</em></div>
<div class="tsr" style="left:7px;top:333px">Trades:</div>
<div class="tsr" style="left:7px;top:362px">AVG:</div>
</div>
</body></html>
